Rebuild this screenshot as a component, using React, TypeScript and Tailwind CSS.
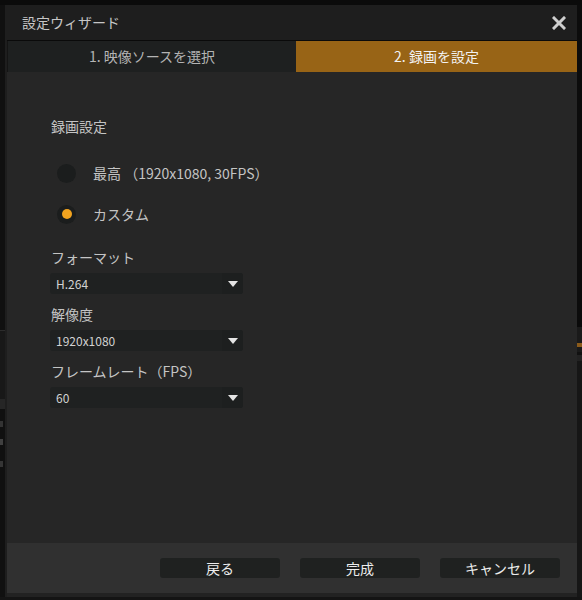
import React from "react";

const font = { fontFamily: '"Noto Sans CJK JP", "Noto Sans", sans-serif' };

function Radio({ checked, label }: { checked?: boolean; label: string }) {
  return (
    <div className="flex items-center h-5">
      <span className="ml-[7px] w-[19px] h-[19px] rounded-full bg-[#1b1d1d] flex items-center justify-center">
        {checked && <span className="w-[10px] h-[10px] rounded-full bg-[#f2a31f]" />}
      </span>
      <span className="ml-[17px] text-[14px] text-[#c4c4c4] leading-5">{label}</span>
    </div>
  );
}

function Select({ value }: { value: string }) {
  return (
    <div className="mt-[6px] w-[193px] h-[21px] rounded-[3px] bg-[#1f2121] flex items-center">
      <span className="flex-1 pl-[6px] text-[12px] text-[#d2d2d2] leading-none">{value}</span>
      <span className="w-[21px] h-full rounded-r-[3px] bg-[#1d1f1f] flex items-center justify-center">
        <svg width="10" height="6" viewBox="0 0 10 6">
          <path d="M0 0 H10 L5 6 Z" fill="#e4e4e4" />
        </svg>
      </span>
    </div>
  );
}

function Label({ text, gap }: { text: string; gap: string }) {
  return <div className={`${gap} pl-[1px] text-[14px] leading-5 text-[#c4c4c4]`}>{text}</div>;
}

function Button({ text }: { text: string }) {
  return (
    <button className="w-[120px] h-[20px] rounded-[3px] bg-[#1f2120] text-[14px] leading-5 text-[#ececec]">
      {text}
    </button>
  );
}

export default function App() {
  return (
    <div className="w-[582px] h-[600px] bg-[#141414] flex flex-col overflow-hidden" style={font}>
      <div className="h-[5px] bg-[#0b0b0b]" />
      <div className="flex flex-1">
        {/* peek of the window underneath, left */}
        <div className="w-[5px] flex flex-col bg-[#101010]">
          <div className="h-[325px]" />
          <div className="h-[1px] bg-[#2c2c2c]" />
          <div className="h-[68px] bg-[#181818]" />
          <div className="h-[10px] bg-[#262626]" />
          <div className="h-[12px]" />
          <div className="h-[6px] w-[3px] bg-[#6a6a6a] opacity-40" />
          <div className="h-[12px]" />
          <div className="h-[6px] w-[3px] bg-[#8a8a8a] opacity-40" />
          <div className="h-[16px]" />
          <div className="h-[6px] w-[3px] bg-[#8a8a8a] opacity-30" />
        </div>

        {/* dialog */}
        <div className="w-[572px] h-[592px] bg-[#1e1e1e] flex flex-col">
          <div className="h-[35px] flex items-center justify-between pl-[17px] pr-[11px]">
            <span className="text-[14px] text-[#c6c6c6]">設定ウィザード</span>
            <svg width="14" height="14" viewBox="0 0 14 14">
              <path d="M2 2 L12 12 M12 2 L2 12" stroke="#cfcfcf" strokeWidth="3" strokeLinecap="square" />
            </svg>
          </div>
          <div className="h-[1px] ml-[2px] bg-[#0a0a0a]" />
          <div className="h-[31px] ml-[2px] flex">
            <div className="w-[289px] bg-[#1e2020] border-l border-[#141414] flex items-center justify-center text-[14px] text-[#b4b4b4]">
              1. 映像ソースを選択
            </div>
            <div className="flex-1 bg-[#986416] flex items-center justify-center text-[14px] text-[#f2f2f2]">
              2. 録画を設定
            </div>
          </div>
          <div className="h-[471px] ml-[2px] bg-[#262626] pl-[43px] pt-[44px]">
            <Label text="録画設定" gap="mt-0" />
            <div className="mt-[27px]">
              <Radio label="最高 （1920x1080, 30FPS）" />
            </div>
            <div className="mt-[21px]">
              <Radio checked label="カスタム" />
            </div>
            <Label text="フォーマット" gap="mt-[23px]" />
            <Select value="H.264" />
            <Label text="解像度" gap="mt-[10px]" />
            <Select value="1920x1080" />
            <Label text="フレームレート（FPS）" gap="mt-[10px]" />
            <Select value="60" />
          </div>
          <div className="h-[50px] ml-[2px] bg-[#303030] flex items-start justify-end gap-5 pt-[15px] pr-[17px]">
            <Button text="戻る" />
            <Button text="完成" />
            <Button text="キャンセル" />
          </div>
          <div className="flex-1 ml-[2px] bg-[#222222]" />
        </div>

        {/* peek of the window underneath, right */}
        <div className="flex-1 flex flex-col bg-[#0c0c0c]">
          <div className="h-[315px]" />
          <div className="h-[7px] bg-[#0a0a0a]" />
          <div className="h-[16px] bg-[#1a1a1a]" />
          <div className="h-[4px] bg-[#8a5a1a]" />
          <div className="h-[5px] bg-[#1a1a1a]" />
          <div className="h-[3px] bg-[#111111]" />
          <div className="h-[6px] bg-[#222222]" />
          <div className="flex-1 bg-[#161616]" />
        </div>
      </div>
      <div className="h-[3px] bg-[#141414]" />
    </div>
  );
}
